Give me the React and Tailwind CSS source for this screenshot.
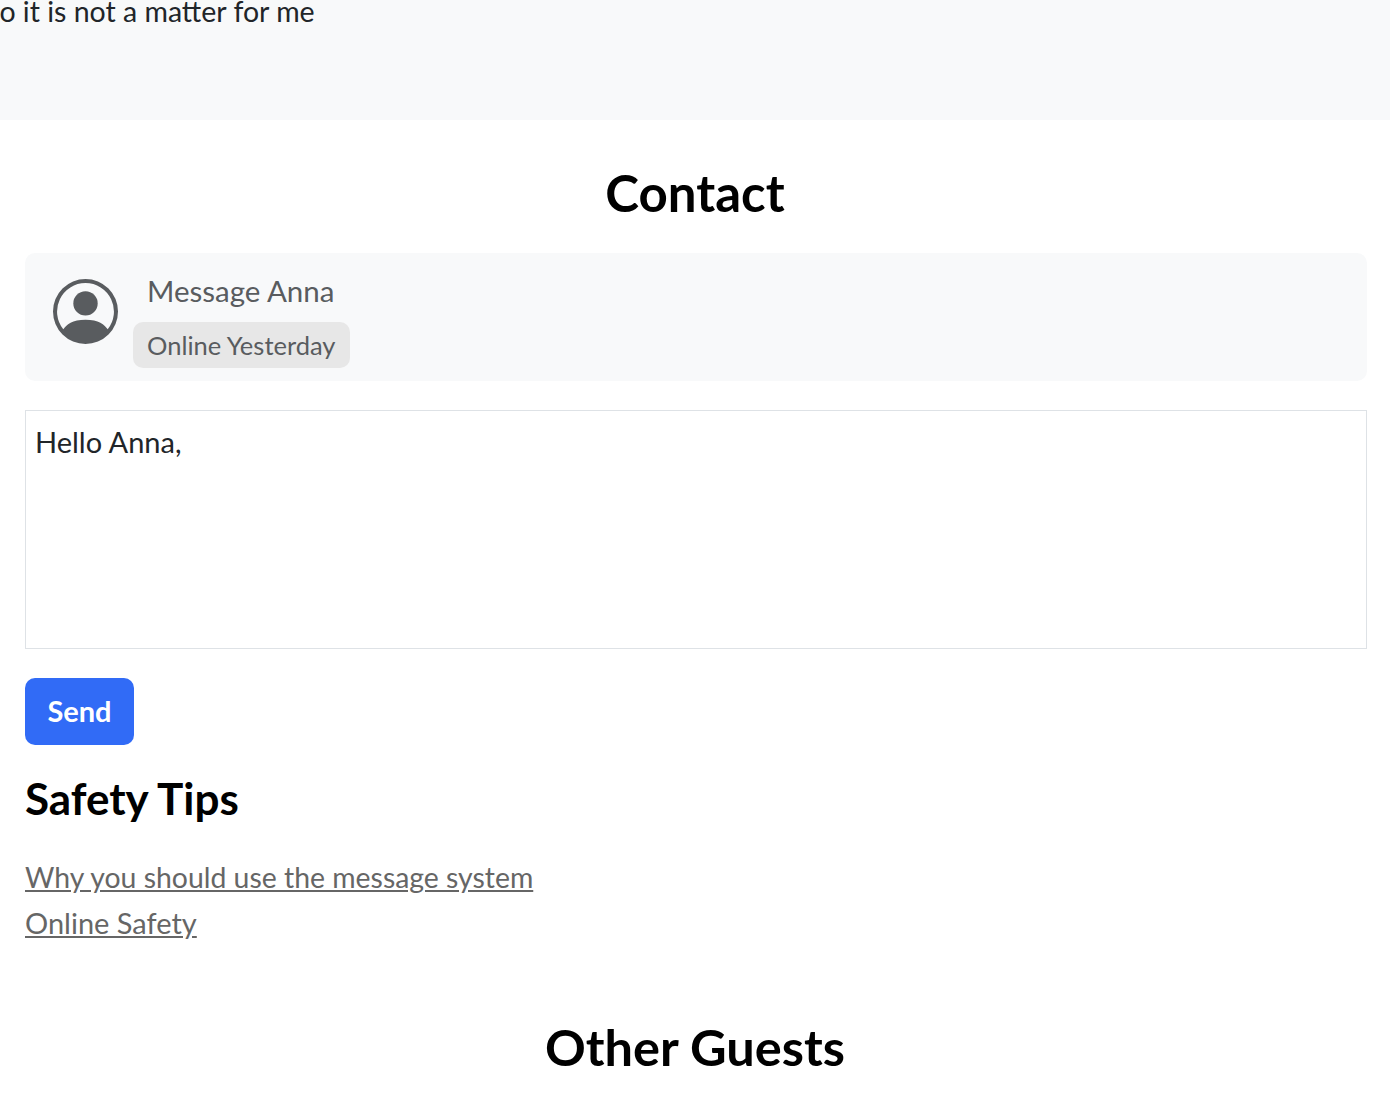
export default function App() {
  return (
    <div className="w-[1390px] h-[1100px] overflow-hidden bg-white font-['Lato',sans-serif]">
      {/* Previous section */}
      <div className="h-[120px] bg-[#f8f9fa] overflow-hidden">
        <p className="mt-[-8px] ml-[-16px] text-[28.5px] leading-[39px] text-[#212529]">So it is not a matter for me</p>
      </div>

      <h2 className="mt-[44px] text-center text-[51px] leading-[58px] font-bold text-black">Contact</h2>

      <div className="pl-[25px] pr-[23px]">
        {/* Host card */}
        <div className="mt-[31px] h-[128px] rounded-[10px] bg-[#f8f9fa] flex">
          <div className="ml-[28px] mt-[26px] w-[65px] h-[65px] shrink-0">
            <svg viewBox="0 0 16 16" className="w-[65px] h-[65px]" fill="#595c5f">
              <path d="M11 6a3 3 0 1 1-6 0 3 3 0 0 1 6 0" />
              <path fillRule="evenodd" d="M0 8a8 8 0 1 1 16 0A8 8 0 0 1 0 8m8-7a7 7 0 0 0-5.468 11.37C3.242 11.226 4.805 10 8 10s4.757 1.225 5.468 2.37A7 7 0 0 0 8 1" />
            </svg>
          </div>
          <div className="ml-[15px]">
            <div className="mt-[17px] ml-[14px] text-[29.5px] leading-[41px] text-[#595c5f]">Message Anna</div>
            <div className="mt-[11px] inline-block rounded-[10px] bg-[#e7e7e7] px-[14px] h-[46px] text-[25.5px] leading-[46px] text-[#595c5f]">Online Yesterday</div>
          </div>
        </div>

        <div className="mt-[29px] h-[239px] border border-[#dee2e6] bg-white px-[9px] pt-[11px] text-[29px] leading-[40px] text-[#212529]">Hello Anna,</div>

        <button className="mt-[29px] block h-[67px] w-[109px] rounded-[10px] bg-[#316bf6] pb-[2px] text-[29px] font-bold text-white">Send</button>

        <h3 className="mt-[25px] text-[44px] leading-[56px] font-bold text-black">Safety Tips</h3>

        <div className="mt-[28px] text-[29px] leading-[46px] text-[#666666] underline">
          <div className="text-[28.4px]">Why you should use the message system</div>
          <div>Online Safety</div>
        </div>
      </div>

      <h2 className="mt-[72px] text-center text-[50.5px] leading-[58px] font-bold text-black">Other Guests</h2>
    </div>
  )
}
